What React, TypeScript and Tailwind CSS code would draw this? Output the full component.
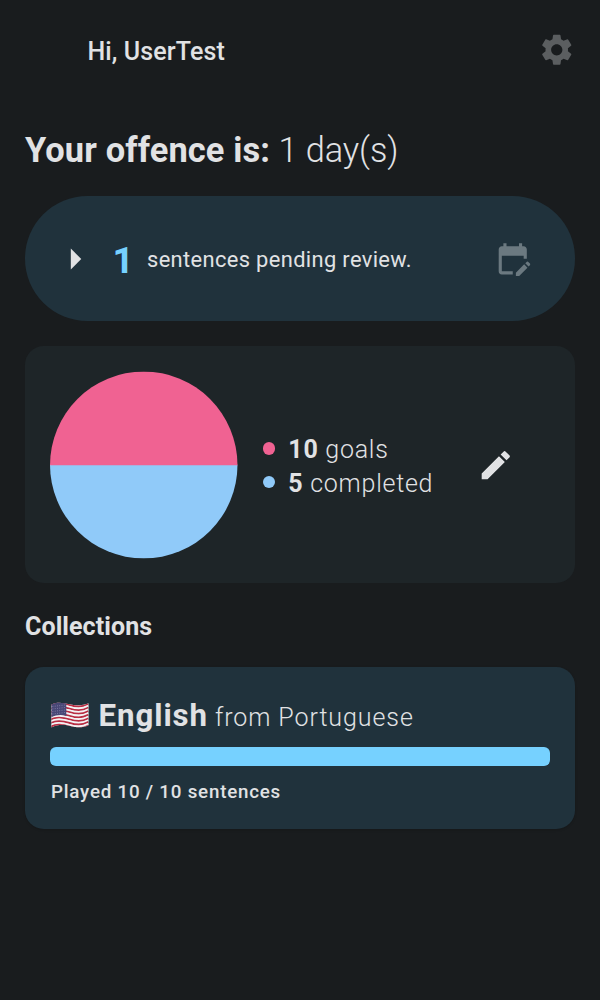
import { MdArrowRight, MdEdit, MdEditCalendar, MdSettings } from "react-icons/md";

function wave(y: number) {
  return `M1 ${y} C7 ${y - 3.2} 13 ${y - 2} 19.5 ${y} S32 ${y + 2.5} 37.5 ${y - 0.6}`;
}

function UsFlag() {
  const stripes = Array.from({ length: 13 }, (_, i) => i);
  return (
    <svg viewBox="0 0 39 28" className="h-7 w-[39px] shrink-0" aria-label="United States">
      <defs>
        <clipPath id="flag">
          <path d="M1.5 3.5 C7 .6 13 1.8 19.5 3.3 S32 4.8 38.5 2.2 V24.2 C32 27.2 26 26.5 19.5 24.7 S7 23.4 1.5 26.5 Z" />
        </clipPath>
      </defs>
      <g clipPath="url(#flag)">
        <rect width="39" height="28" fill="#eeeef0" />
        {stripes.map((i) => (
          <path key={i} d={wave(4 + i * 1.8)} fill="none" stroke={i % 2 ? "#f4f2f4" : "#b92d43"} strokeWidth="1.9" strokeLinecap="square" />
        ))}
        <path d="M0 0 H16.3 V14.9 C10 13.3 6 14.2 0 16.8 Z" fill="#484776" />
        <path d="M2.5 5.5 L15 4 M2.5 8 L15 6.5 M2.5 10.5 L15 9 M2.5 13 L15 11.5" stroke="#9896ba" strokeWidth=".8" strokeDasharray=".8 1.5" fill="none" />
      </g>
    </svg>
  );
}

function Legend({ color, value, label }: { color: string; value: number; label: string }) {
  return (
    <div className="flex h-[33.5px] items-center">
      <span className={`size-[12.5px] rounded-full ${color}`} />
      <span className="ml-[13.3px] pt-[2.5px] text-[25px] leading-[31px] font-light tracking-[0.74px]">
        <b className="font-bold">{value}</b> {label}
      </span>
    </div>
  );
}

export default function App() {
  return (
    <main className="flex min-h-[1000px] w-[600px] flex-col bg-[#191c1e] px-[25px] font-['Roboto',sans-serif] text-[#e1e2e4]">
      <header className="flex h-[100px] items-center justify-between pl-[62.5px]">
        <h1 className="pt-[3px] text-[25px] font-medium tracking-[0.11px]">Hi, UserTest</h1>
        <MdSettings className="size-[37.5px] text-[#5b5e60]" />
      </header>

      <h2 className="flex h-24 items-center pt-[5px] text-[34.4px] font-light">
        <span className="whitespace-pre tracking-[-0.08px]"><b className="font-bold tracking-[0.13px]">Your offence is:</b> 1 day(s)</span>
      </h2>

      <section className="flex h-[125px] shrink-0 items-center rounded-full bg-[#20323c] pr-[43.7px] pl-[25px]">
        <MdArrowRight className="size-[50px]" />
        <span className="ml-[12.5px] pt-[5px] text-[37.5px] leading-none font-bold text-[#76d1ff]">1</span>
        <span className="ml-[13px] pt-[3px] text-[21.875px] tracking-[0.36px]">sentences pending review.</span>
        <MdEditCalendar className="ml-auto size-[37.5px] text-[#6b7980]" />
      </section>

      <section className="mt-[25px] flex h-[237px] shrink-0 items-center rounded-[18.75px] bg-[#1e2528] px-[25px]">
        <svg viewBox="0 0 188 188" className="size-[187.5px] translate-y-[0.5px]">
          <path d="M0 93.5 A94 94 0 0 0 188 93.5 Z" fill="#90caf9" />
          <path d="M0 94 A94 94 0 0 1 188 94 Z" fill="#f06292" />
        </svg>
        <div className="ml-[25px] pt-[1.5px]">
          <Legend color="bg-[#f06292]" value={10} label="goals" />
          <Legend color="bg-[#90caf9]" value={5} label="completed" />
        </div>
        <MdEdit className="mr-[35.2px] ml-auto size-[37.5px] translate-y-[0.5px]" />
      </section>

      <h3 className="mt-[24.5px] text-[25px] leading-[37.5px] font-bold tracking-[0.08px]">Collections</h3>

      <section className="mt-[22px] h-[162px] shrink-0 rounded-[18.75px] bg-[#20323c] px-[25px] pt-[25px] shadow-sm">
        <div className="flex h-[46px] items-center">
          <UsFlag />
          <span className="ml-[9.5px] pt-[4px] text-[31.25px] leading-[42px] font-bold tracking-[0.92px]">
            English<span className="text-[25px] font-light tracking-[0.92px]"> from Portuguese</span>
          </span>
        </div>
        <div className="mt-[9px] h-[18.75px] rounded-[6px] bg-[#76d1ff]" />
        <p className="mt-3 pl-px text-[18.75px] leading-[28px] font-medium tracking-[0.78px]">Played 10 / 10 sentences</p>
      </section>
    </main>
  );
}
